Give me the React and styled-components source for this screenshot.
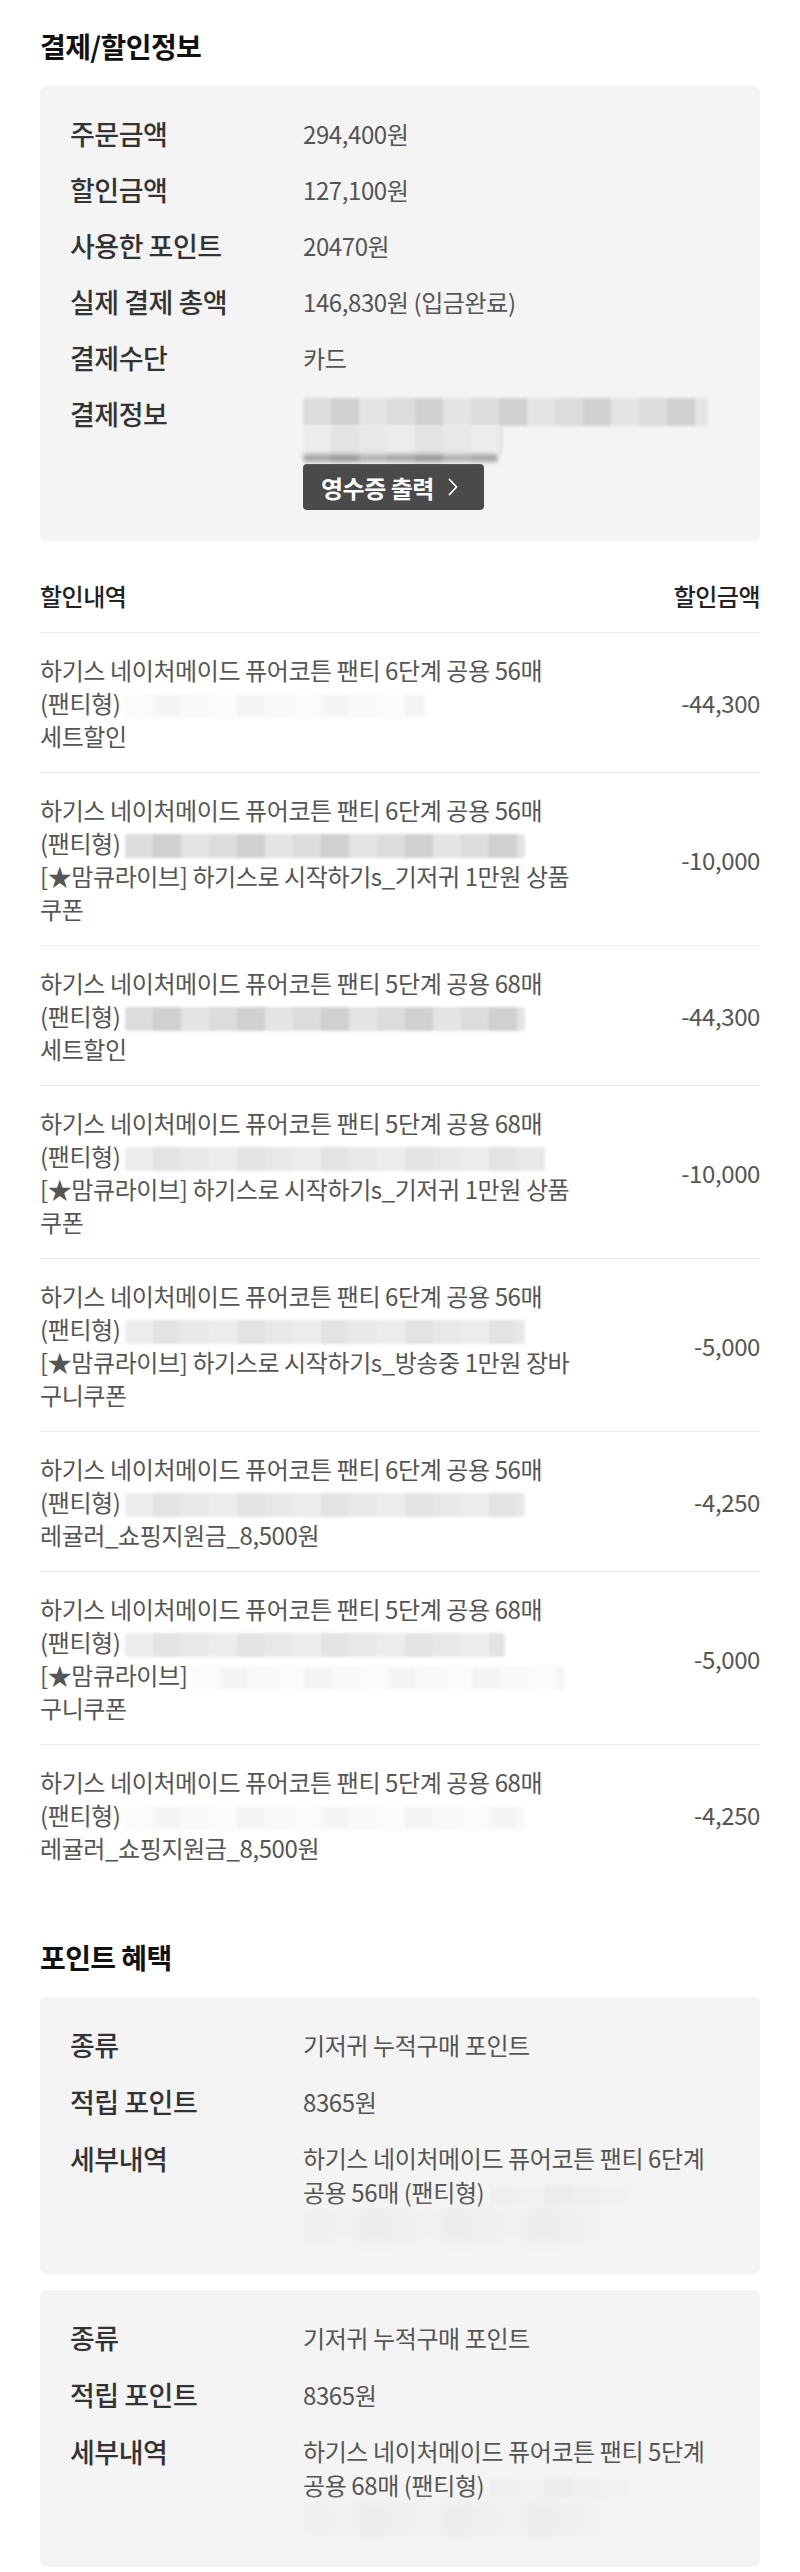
import React from 'react';
import styled, { createGlobalStyle, css } from 'styled-components';

// =============================================================================
// 결제/할인정보 + 포인트 혜택 (주문 상세)
// =============================================================================

const GlobalStyle = createGlobalStyle`
  html, body {
    margin: 0;
    padding: 0;
    background: #ffffff;
  }

  body {
    font-family: "Noto Sans CJK KR", "Noto Sans", "Liberation Sans", sans-serif;
    color: #333;
    -webkit-font-smoothing: antialiased;
  }
`;

const Page = styled.main`
  width: 800px;
  box-sizing: border-box;
  padding: 28px 40px 8px;
`;

const SectionTitle = styled.h2`
  margin: 0 0 22px;
  font-size: 28px;
  font-weight: 700;
  line-height: 36px;
  color: #111;
  letter-spacing: -0.6px;
`;

const GrayCard = styled.section`
  display: flex;
  flex-direction: column;
  gap: ${({ $gap }) => $gap || 20}px;
  padding: 30px 30px 31px;
  background: #f4f4f4;
  border-radius: 6px;

  & + & {
    margin-top: 16px;
  }
`;

const InfoRow = styled.div`
  display: grid;
  grid-template-columns: 233px 1fr;
  align-items: start;
`;

const Label = styled.div`
  font-size: 27px;
  font-weight: 500;
  line-height: 36px;
  color: #333;
  letter-spacing: -0.5px;
`;

const Value = styled.div`
  font-size: 24px;
  line-height: ${({ $lh }) => $lh || 36}px;
  color: #555;
  letter-spacing: -0.4px;
  word-break: ${({ $keepAll }) => ($keepAll ? 'keep-all' : 'normal')};
`;

// 개인정보 가림 처리 (모자이크/번짐)
const tones = {
  white: ['#fbfbfb', '#f5f5f5', '#f9f9f9'],
  faint: ['#efefef', '#f1f1f1', '#ececec'],
  light: ['#ececec', '#e3e3e3', '#e8e8e8'],
  mid: ['#dcdcdc', '#d0d0d0', '#e4e4e4'],
  dark: ['#a8a8a8', '#9a9a9a', '#b4b4b4'],
};

const Smudge = styled.span`
  display: ${({ $block }) => ($block ? 'block' : 'inline-block')};
  width: ${({ $w }) => $w}px;
  height: ${({ $h }) => $h || 24}px;
  vertical-align: middle;
  border-radius: 3px;
  filter: blur(${({ $blur }) => ($blur == null ? 1.5 : $blur)}px);
  ${({ $tone = 'light' }) => {
    const [a, b, c] = tones[$tone];
    return css`
      background: repeating-linear-gradient(
        90deg,
        ${a} 0 28px,
        ${b} 28px 56px,
        ${c} 56px 84px
      );
    `;
  }}
`;

const SmudgeStack = styled.div`
  display: flex;
  flex-direction: column;
  padding-top: 2px;
`;

const ReceiptButton = styled.button`
  display: inline-flex;
  align-items: center;
  gap: 14px;
  height: 46px;
  margin-top: 2px;
  padding: 0 26px 0 18px;
  border: none;
  border-radius: 4px;
  background: #4a4a4a;
  color: #fff;
  font-family: inherit;
  font-size: 24px;
  font-weight: 700;
  letter-spacing: -0.5px;
  cursor: pointer;

  svg {
    width: 10px;
    height: 18px;
  }
`;

const DiscountSection = styled.section`
  margin-top: 38px;
`;

const ListHeader = styled.div`
  display: flex;
  justify-content: space-between;
  padding-bottom: 20px;
  border-bottom: 1px solid #ebebeb;
  font-size: 24px;
  font-weight: 500;
  line-height: 33px;
  color: #222;
  letter-spacing: -0.5px;
`;

const DiscountList = styled.ul`
  margin: 0 0 55px;
  padding: 0;
  list-style: none;
`;

const DiscountItem = styled.li`
  display: flex;
  align-items: center;
  padding: 20px 0;
  border-bottom: 1px solid #ebebeb;

  &:last-child {
    border-bottom: none;
  }
`;

const ItemText = styled.div`
  width: 540px;
  font-size: 24px;
  line-height: 33px;
  color: #555;
  letter-spacing: -0.4px;
`;

const ItemLine = styled.div``;

const Amount = styled.div`
  margin-left: auto;
  font-size: 24px;
  line-height: 33px;
  color: #555;
  letter-spacing: -0.4px;
`;

const Chevron = () => (
  <svg viewBox="0 0 10 18" fill="none">
    <path d="M1.5 1.5L8.5 9L1.5 16.5" stroke="#fff" strokeWidth="1.8" strokeLinecap="round" strokeLinejoin="round" />
  </svg>
);

const payInfo = [
  ['주문금액', '294,400원'],
  ['할인금액', '127,100원'],
  ['사용한 포인트', '20470원'],
  ['실제 결제 총액', '146,830원 (입금완료)'],
  ['결제수단', '카드'],
];

const P6 = '하기스 네이처메이드 퓨어코튼 팬티 6단계 공용 56매';
const P5 = '하기스 네이처메이드 퓨어코튼 팬티 5단계 공용 68매';
const LIVE_DIAPER = '[★맘큐라이브] 하기스로 시작하기s_기저귀 1만원 상품 쿠폰';
const LIVE_CART = '[★맘큐라이브] 하기스로 시작하기s_방송중 1만원 장바구니쿠폰';
const REGULAR = '레귤러_쇼핑지원금_8,500원';

const discounts = [
  { name: P6, smudge: { w: 300, tone: 'white' }, coupon: '세트할인', amount: '-44,300' },
  { name: P6, smudge: { w: 400, tone: 'mid' }, coupon: LIVE_DIAPER, amount: '-10,000' },
  { name: P5, smudge: { w: 400, tone: 'mid' }, coupon: '세트할인', amount: '-44,300' },
  { name: P5, smudge: { w: 420, tone: 'light' }, coupon: LIVE_DIAPER, amount: '-10,000' },
  { name: P6, smudge: { w: 400, tone: 'light' }, coupon: LIVE_CART, amount: '-5,000' },
  { name: P6, smudge: { w: 400, tone: 'light' }, coupon: REGULAR, amount: '-4,250' },
  {
    name: P5,
    smudge: { w: 380, tone: 'light' },
    coupon: (
      <>
        [★맘큐라이브] <Smudge $w={372} $tone="white" /> 구니쿠폰
      </>
    ),
    amount: '-5,000',
  },
  { name: P5, smudge: { w: 400, tone: 'white' }, coupon: REGULAR, amount: '-4,250' },
];

const pointCards = [
  { type: '기저귀 누적구매 포인트', point: '8365원', line1: '하기스 네이처메이드 퓨어코튼 팬티 6단계', line2: '공용 56매 (팬티형)' },
  { type: '기저귀 누적구매 포인트', point: '8365원', line1: '하기스 네이처메이드 퓨어코튼 팬티 5단계', line2: '공용 68매 (팬티형)' },
];

const OrderPaymentDetail = () => (
  <Page>
    <SectionTitle>결제/할인정보</SectionTitle>
    <GrayCard>
      {payInfo.map(([label, value]) => (
        <InfoRow key={label}>
          <Label>{label}</Label>
          <Value>{value}</Value>
        </InfoRow>
      ))}
      <InfoRow>
        <Label>결제정보</Label>
        <Value>
          <SmudgeStack>
            <Smudge $block $w={405} $h={28} $tone="mid" />
            <Smudge $block $w={200} $h={28} $tone="light" />
            <Smudge $block $w={195} $h={8} $tone="dark" $blur={2} />
          </SmudgeStack>
          <ReceiptButton type="button">
            영수증 출력
            <Chevron />
          </ReceiptButton>
        </Value>
      </InfoRow>
    </GrayCard>

    <DiscountSection>
      <ListHeader>
        <span>할인내역</span>
        <span>할인금액</span>
      </ListHeader>
      <DiscountList>
        {discounts.map((d, i) => (
          <DiscountItem key={i}>
            <ItemText>
              <ItemLine>{d.name}</ItemLine>
              <ItemLine>
                (팬티형) <Smudge $w={d.smudge.w} $tone={d.smudge.tone} />
              </ItemLine>
              <ItemLine>{d.coupon}</ItemLine>
            </ItemText>
            <Amount>{d.amount}</Amount>
          </DiscountItem>
        ))}
      </DiscountList>
    </DiscountSection>

    <SectionTitle>포인트 혜택</SectionTitle>
    {pointCards.map((p, i) => (
      <GrayCard key={i} $gap={21}>
        <InfoRow>
          <Label>종류</Label>
          <Value>{p.type}</Value>
        </InfoRow>
        <InfoRow>
          <Label>적립 포인트</Label>
          <Value>{p.point}</Value>
        </InfoRow>
        <InfoRow>
          <Label>세부내역</Label>
          <Value $lh={34} $keepAll>
            <div>{p.line1}</div>
            <div>
              {p.line2} <Smudge $w={140} $h={20} $tone="faint" />
            </div>
            <Smudge $block $w={300} $h={34} $tone="faint" $blur={4} />
          </Value>
        </InfoRow>
      </GrayCard>
    ))}
  </Page>
);

export default function App() {
  return (
    <>
      <GlobalStyle />
      <OrderPaymentDetail />
    </>
  );
}
